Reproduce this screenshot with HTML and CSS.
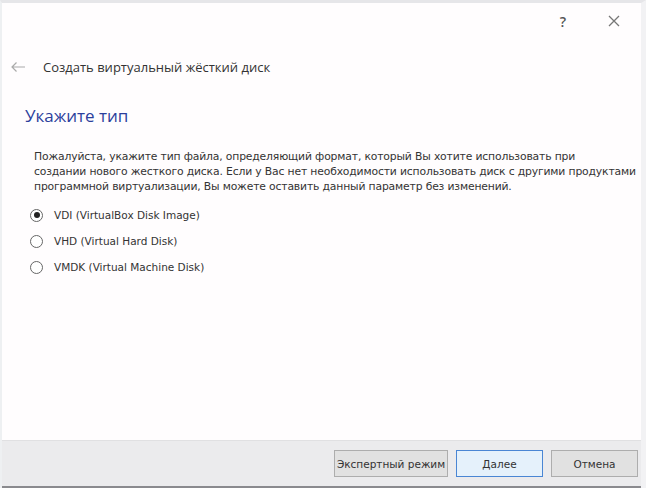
FILE: index.html
```html
<!DOCTYPE html>
<html lang="ru">
<head>
<meta charset="utf-8">
<link rel="stylesheet" href="styles.css">
</head>
<body>
<div class="window">
  <div class="titlebar">
    <span class="help">?</span>
    <svg class="close" width="14" height="14" viewBox="0 0 14 14"><path d="M2 2 L12 12 M12 2 L2 12" stroke="#777" stroke-width="1.3" fill="none"/></svg>
  </div>
  <div class="nav">
    <svg class="back" width="16" height="12" viewBox="0 0 16 12"><path d="M15 6 H2 M6.5 1.5 L2 6 L6.5 10.5" stroke="#aaa" stroke-width="1.2" fill="none"/></svg>
    <span class="navtitle">Создать виртуальный жёсткий диск</span>
  </div>
  <main class="content">
    <h1 class="heading">Укажите тип</h1>
    <p class="desc">Пожалуйста, укажите тип файла, определяющий формат, который Вы хотите использовать при<br>создании нового жесткого диска. Если у Вас нет необходимости использовать диск с другими продуктами<br>программной виртуализации, Вы можете оставить данный параметр без изменений.</p>
    <div class="options">
      <label class="opt"><span class="radio checked"></span>VDI (VirtualBox Disk Image)</label>
      <label class="opt"><span class="radio"></span>VHD (Virtual Hard Disk)</label>
      <label class="opt"><span class="radio"></span>VMDK (Virtual Machine Disk)</label>
    </div>
  </main>
  <footer class="footer">
    <button class="btn expert">Экспертный режим</button>
    <button class="btn primary">Далее</button>
    <button class="btn">Отмена</button>
  </footer>
</div>
</body>
</html>
```

FILE: styles.css
```css
html, body {
  margin: 0;
  padding: 0;
  background: #fff;
}
.window {
  width: 646px;
  height: 488px;
  box-sizing: border-box;
  border-top: 3px solid #e6e6e9;
  border-left: 2px solid #eef0f2;
  border-right: 5px solid #f2f2f4;
  display: flex;
  flex-direction: column;
  background: #fffdfe;
  font-family: "DejaVu Sans", sans-serif;
  overflow: hidden;
}
.titlebar {
  height: 36px;
  display: flex;
  align-items: center;
  justify-content: flex-end;
  padding-right: 20px;
}
.help {
  font-family: "Open Sans", sans-serif;
  font-size: 14px;
  color: #555;
  margin-right: 41px;
  font-weight: 600;
}
.close {
  display: block;
}
.nav {
  height: 56px;
  display: flex;
  align-items: center;
  padding-left: 8px;
}
.back {
  margin-right: 17px;
}
.navtitle {
  font-family: "Open Sans", sans-serif;
  font-size: 13px;
  color: #333;
}
.content {
  flex: 1;
  padding-left: 23px;
  padding-right: 1px;
}
.heading {
  margin: 9px 0 0 0;
  font-family: "Open Sans", sans-serif;
  font-weight: 400;
  font-size: 17px;
  color: #2c3f9c;
  line-height: 24px;
}
.desc {
  margin: 21px 0 0 9px;
  font-size: 10.8px;
  letter-spacing: -0.16px;
  line-height: 15px;
  color: #333;
  white-space: nowrap;
}
.options {
  margin-top: 8px;
  margin-left: 5px;
  display: flex;
  flex-direction: column;
}
.opt {
  height: 26px;
  display: flex;
  align-items: center;
  font-size: 10.5px;
  color: #333;
}
.radio {
  width: 11px;
  height: 11px;
  border: 1px solid #666;
  border-radius: 50%;
  margin-right: 11px;
  box-sizing: content-box;
  background: #fff;
  position: relative;
}
.radio.checked::after {
  content: "";
  position: absolute;
  left: 2.5px;
  top: 2.5px;
  width: 6px;
  height: 6px;
  border-radius: 50%;
  background: #222;
}
.footer {
  height: 45px;
  background: #ebebed;
  border-top: 1px solid #e0e0e2;
  border-bottom: 2px solid #8a8a8e;
  display: flex;
  align-items: center;
  justify-content: flex-end;
  padding-right: 3px;
  gap: 8px;
}
.btn {
  height: 27px;
  width: 87px;
  border: 1px solid #adadad;
  background: #e1e1e1;
  font-family: "DejaVu Sans", sans-serif;
  font-size: 10.5px;
  color: #333;
  padding: 0;
}
.btn.expert {
  width: 114px;
}
.btn.primary {
  border-color: #4a86d4;
  background: #e5f1fb;
}
```
